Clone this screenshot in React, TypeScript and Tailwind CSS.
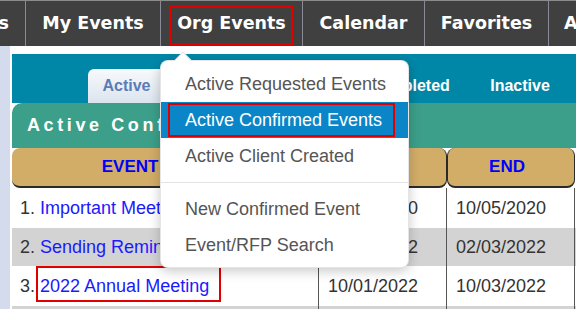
import React from 'react'

const navItems = [
  { label: 'My Events', w: 'w-[135px]' },
  { label: 'Org Events', w: 'w-[142px]', marked: true },
  { label: 'Calendar', w: 'w-[122px]' },
  { label: 'Favorites', w: 'w-[124px]' },
]

const rows = [
  { n: 1, name: 'Important Meeting Reminder', start: '10/03/2020', end: '10/05/2020', bg: 'bg-white' },
  { n: 2, name: 'Sending Reminders Test', start: '02/01/2022', end: '02/03/2022', bg: 'bg-[#d3d3d3]' },
  { n: 3, name: '2022 Annual Meeting', start: '10/01/2022', end: '10/03/2022', bg: 'bg-white', marked: true },
  { n: 4, name: 'Board Retreat', start: '11/12/2022', end: '11/13/2022', bg: 'bg-[#d3d3d3]' },
]

export default function App() {
  return (
    <div className="relative w-[576px] h-[309px] overflow-hidden bg-white font-['Liberation_Sans',Arial,sans-serif]">
      {/* Top nav */}
      <div className="flex h-[46px] bg-[#404040] border-t border-[#8c8c8c] text-white font-bold text-[17.5px] font-['DejaVu_Sans',Verdana,sans-serif]">
        <div className="w-[26px] shrink-0 overflow-hidden flex items-center justify-end pr-[16px] border-r border-[#8a8a96]">
          <span className="whitespace-nowrap">Events</span>
        </div>
        {navItems.map((item) => (
          <div
            key={item.label}
            className={`relative ${item.w} shrink-0 flex items-center justify-center border-r border-[#8a8a96]`}
          >
            <span className="whitespace-nowrap">{item.label}</span>
            {item.marked && (
              <span className="absolute left-[8px] right-[9px] top-[5px] bottom-[1px] border-2 border-[#e00000]" />
            )}
          </div>
        ))}
        <div className="shrink-0 flex items-center pl-[15px]">
          <span className="whitespace-nowrap">About</span>
        </div>
      </div>

      <div className="flex">
        <div className="w-[10px] shrink-0 h-[263px] bg-[#d3dbec]" />
        <div className="ml-[2px] flex-1 pt-[8px]">
          {/* Tabs */}
          <div className="h-[49px] bg-[#0087a7] pt-[15px] pl-[76px] flex">
            <div className="w-[77px] h-[34px] rounded-t-[6px] bg-gradient-to-b from-[#f8fafc] to-[#dbe4ee] flex items-center justify-center text-[16px] font-bold text-[#5b7cb8]">
              Active
            </div>
            <div className="w-[188px] h-[34px] flex items-center justify-center text-[16px] font-bold text-white">
              Future
            </div>
            <div className="w-[111px] h-[34px] flex items-center justify-center text-[16px] font-bold text-white">
              Completed
            </div>
            <div className="w-[112px] h-[34px] flex items-center justify-center text-[16px] font-bold text-white">
              Inactive
            </div>
          </div>

          {/* Title bar */}
          <div className="h-[45px] bg-[#3c9f89] rounded-tl-[10px] flex items-center pl-[15px] text-white font-bold text-[18px] tracking-[0.2em] whitespace-nowrap">
            Active Confirmed Events
          </div>

          {/* Table header */}
          <div className="flex h-[40px] text-[17px] font-bold text-[#0000ff]">
            <div className="w-[306px] rounded-[8px] bg-[#d2ad68] border-b-2 border-r border-[#2a2a2a] flex items-center justify-center pr-[14px]">
              EVENT NAME
            </div>
            <div className="w-[129px] rounded-[8px] bg-[#d2ad68] border-b-2 border-x border-[#2a2a2a] flex items-center justify-center pr-[8px]">
              START
            </div>
            <div className="w-[128px] rounded-[8px] bg-[#d2ad68] border-b-2 border-x border-[#2a2a2a] flex items-center justify-center pr-[8px]">
              END
            </div>
          </div>

          {/* Rows */}
          {rows.map((r, i) => (
            <div
              key={r.n}
              className={`flex ${i === 1 ? 'h-[38px]' : 'h-[40px]'} ${r.bg} text-[18px] text-[#333]`}
            >
              <div className="w-[306px] shrink-0 flex items-center pl-[8px] whitespace-nowrap overflow-hidden">
                <span>{r.n}.&nbsp;</span>
                <span className="relative inline-block leading-[20px] text-[#1a1aff]">
                  {r.name}
                  {r.marked && (
                    <span className="absolute -left-[4px] -right-[12px] -top-[10px] -bottom-[6px] border-2 border-[#e00000]" />
                  )}
                </span>
              </div>
              <div className="w-[128px] shrink-0 flex items-center pl-[9px] border-l border-[#555]">
                {r.start}
              </div>
              <div className="w-[129px] shrink-0 flex items-center pl-[9px] border-x border-[#555]">
                {r.end}
              </div>
            </div>
          ))}
        </div>
      </div>

      {/* Dropdown menu */}
      <div className="absolute left-[160px] top-[60px] w-[249px] h-[208px] bg-white rounded-[8px] border border-black/10 shadow-[0_3px_12px_rgba(0,0,0,0.22)] py-[5px] text-[18px] text-[#555]">
        <span className="absolute left-[16px] -top-[7px] w-[12px] h-[12px] rotate-45 bg-white border-l border-t border-black/10" />
        <div className="h-[36px] flex items-center pl-[24px] whitespace-nowrap">Active Requested Events</div>
        <div className="relative h-[36px] flex items-center pl-[24px] whitespace-nowrap bg-[#0a86c8] text-white">
          Active Confirmed Events
          <span className="absolute left-[7px] right-[13px] top-[1px] bottom-[1px] border-2 border-[#e00000]" />
        </div>
        <div className="h-[36px] flex items-center pl-[24px] whitespace-nowrap">Active Client Created</div>
        <div className="my-[8px] h-px bg-[#e3e3e3]" />
        <div className="h-[36px] flex items-center pl-[24px] whitespace-nowrap">New Confirmed Event</div>
        <div className="h-[36px] flex items-center pl-[24px] whitespace-nowrap">Event/RFP Search</div>
      </div>
    </div>
  )
}
